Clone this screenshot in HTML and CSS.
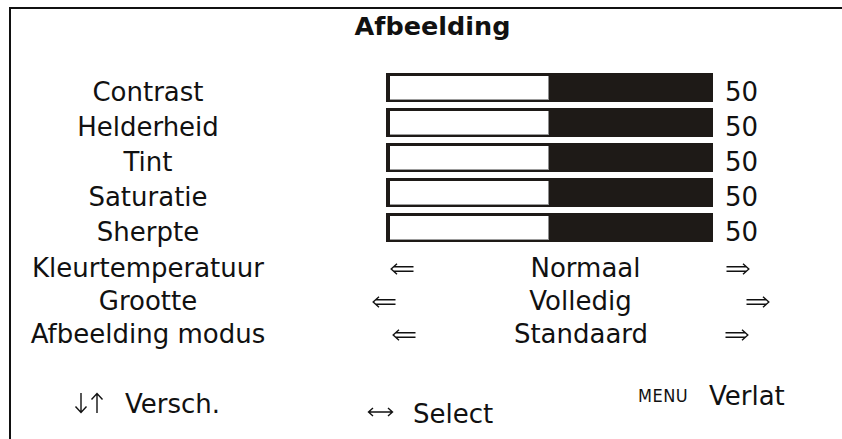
FILE: index.html
```html
<!DOCTYPE html>
<html lang="nl">
<head>
    <meta charset="UTF-8">
    <meta name="viewport" content="width=device-width, initial-scale=1.0">
    <title>Afbeelding</title>
    <link rel="stylesheet" href="styles.css">
</head>
<body>

    <div class="osd">
        <h1 class="osd-title">Afbeelding</h1>

        <!-- Schuifregelaars -->
        <div class="sliders">
            <div class="row">
                <span class="label">Contrast</span>
                <div class="bar"><div class="fill"></div></div>
                <span class="num">50</span>
            </div>
            <div class="row">
                <span class="label">Helderheid</span>
                <div class="bar"><div class="fill"></div></div>
                <span class="num">50</span>
            </div>
            <div class="row">
                <span class="label">Tint</span>
                <div class="bar"><div class="fill"></div></div>
                <span class="num">50</span>
            </div>
            <div class="row">
                <span class="label">Saturatie</span>
                <div class="bar"><div class="fill"></div></div>
                <span class="num">50</span>
            </div>
            <div class="row">
                <span class="label">Sherpte</span>
                <div class="bar"><div class="fill"></div></div>
                <span class="num">50</span>
            </div>
        </div>

        <!-- Keuzelijsten -->
        <div class="options">
            <div class="opt-row opt-kleur">
                <span class="label">Kleurtemperatuur</span>
                <div class="opt">
                    <span class="prev"><svg width="24" height="12" viewBox="0 0 24 12"><path d="M7 0.8 L1.2 6 L7 11.2 M3.5 3.8 H23.5 M3.5 8.2 H23.5"/></svg></span>
                    <span class="val">Normaal</span>
                    <span class="next"><svg width="24" height="12" viewBox="0 0 24 12"><path d="M17 0.8 L22.8 6 L17 11.2 M20.5 3.8 H0.5 M20.5 8.2 H0.5"/></svg></span>
                </div>
            </div>
            <div class="opt-row opt-grootte">
                <span class="label">Grootte</span>
                <div class="opt">
                    <span class="prev"><svg width="24" height="12" viewBox="0 0 24 12"><path d="M7 0.8 L1.2 6 L7 11.2 M3.5 3.8 H23.5 M3.5 8.2 H23.5"/></svg></span>
                    <span class="val">Volledig</span>
                    <span class="next"><svg width="24" height="12" viewBox="0 0 24 12"><path d="M17 0.8 L22.8 6 L17 11.2 M20.5 3.8 H0.5 M20.5 8.2 H0.5"/></svg></span>
                </div>
            </div>
            <div class="opt-row opt-modus">
                <span class="label">Afbeelding modus</span>
                <div class="opt">
                    <span class="prev"><svg width="24" height="12" viewBox="0 0 24 12"><path d="M7 0.8 L1.2 6 L7 11.2 M3.5 3.8 H23.5 M3.5 8.2 H23.5"/></svg></span>
                    <span class="val">Standaard</span>
                    <span class="next"><svg width="24" height="12" viewBox="0 0 24 12"><path d="M17 0.8 L22.8 6 L17 11.2 M20.5 3.8 H0.5 M20.5 8.2 H0.5"/></svg></span>
                </div>
            </div>
        </div>

        <!-- Toetsen onderaan -->
        <div class="footer">
            <div class="hint hint-move">
                <span class="key key-ud"><svg width="30" height="22" viewBox="0 0 30 22"><path d="M7 1 V20.5 M1.5 14.5 L7 20.5 L12.5 14.5 M23 21 V1.5 M17.5 7.5 L23 1.5 L28.5 7.5"/></svg></span>
                Versch.
            </div>
            <div class="hint hint-select">
                <span class="key key-lr"><svg width="27" height="10" viewBox="0 0 27 10"><path d="M1.5 5 H25.5 M6 1 L1.5 5 L6 9 M21 1 L25.5 5 L21 9"/></svg></span>
                Select
            </div>
            <div class="hint hint-exit"><span class="key key-menu">MENU</span>Verlat</div>
        </div>
    </div>

</body>
</html>
```

FILE: styles.css
```css
html, body {
    margin: 0;
    overflow: hidden;
    background-color: #fff;
}
body {
    font-family: "DejaVu Sans", Verdana, sans-serif;
    font-size: 26px;
    color: #111;
}
svg path {
    fill: none;
    stroke: #111;
    stroke-width: 1.4;
}
.osd {
    margin: 7px 0 0 9px;
    width: 843px;
    height: 440px;
    border-top: 2px solid #111;
    border-left: 2px solid #111;
}
.osd-title {
    margin: 0;
    padding-top: 2px;
    font-size: 25.5px;
    line-height: 30px;
    font-weight: bold;
    text-align: center;
}
.sliders {
    margin-top: 32px;
    display: flex;
    flex-direction: column;
    gap: 6px;
}
.row {
    display: flex;
    align-items: flex-end;
    height: 29px;
}
.label {
    width: 274px;
    flex: none;
    text-align: center;
}
.row .label, .num {
    line-height: 20px;
}
.bar {
    margin-left: 101px;
    width: 327px;
    height: 29px;
    box-sizing: border-box;
    padding: 3px 0 2px 4px;
    background-color: #1e1a17;
    display: flex;
}
.fill {
    width: 159px; /* 50 van 100 */
    box-sizing: border-box;
    background-color: #fff;
    border-right: 1px solid #8c8c8c;
    border-bottom: 1px solid #9c9c9c;
}
.num {
    margin-left: 12px;
}
.options {
    margin-top: 10px;
}
.opt-row {
    display: flex;
    height: 33px;
    line-height: 33px;
}
.opt {
    display: flex;
    margin-left: 101px;
}
.prev, .next {
    width: 30px;
}
.prev svg, .next svg {
    display: block;
    margin-top: 11px;
}
.prev {
    margin-left: var(--l);
}
.val {
    width: 200px;
    text-align: center;
    margin-left: var(--v);
}
.next {
    margin-left: var(--r);
}
.opt-kleur   { --l: 4px;   --v: 65.5px; --r: 40.5px; }
.opt-grootte { --l: -14px; --v: 78.5px; --r: 65.5px; }
.opt-modus   { --l: 6px;   --v: 59px;   --r: 44px; }
.footer {
    margin-top: 30px;
    display: flex;
    align-items: flex-start;
    padding-left: 63px;
    line-height: 30px;
}
.hint {
    display: flex;
}
.hint-move {
    width: 293px;
    margin-top: 8px;
}
.hint-select {
    width: 271px;
    margin-top: 18px;
}
.key {
    flex: none;
}
.key svg {
    display: block;
}
.key-ud {
    width: 51px;
    padding-top: 3px;
}
.key-lr {
    width: 46px;
    padding-top: 8px;
}
.key-menu {
    width: 71px;
    font-family: "DejaVu Sans Condensed", "DejaVu Sans", sans-serif;
    font-stretch: condensed;
    font-size: 18px;
    letter-spacing: 0.5px;
}
```
